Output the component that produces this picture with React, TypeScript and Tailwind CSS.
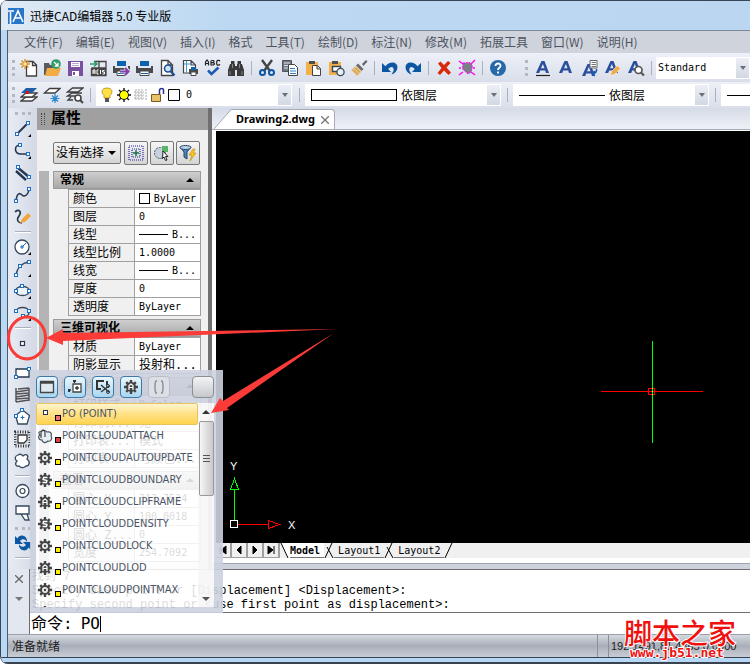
// src/App.tsx
import React, { useState } from 'react';

const SIMSUN = 'font-["DejaVu_Sans_Mono","Noto_Sans_CJK_SC",monospace]';
const YAHEI = 'font-["Noto_Sans_CJK_SC",sans-serif]';

const letterA = (
  <path d="M1 14 6.500 2H9.500L14 14H11L10.200 11.500H5.200L4.200 14ZM6 9.300H9.500L7.900 4.900Z" fill="#2b4f9e" />
);

const page = <path d="M6.500 2.500H13L16.500 6V17H6.500ZM12.500 2.500V6.500H16.500" fill="#fff" stroke="#3f3f3f" strokeWidth="1.300" />;

const printer = (
  <>
    <path d="M5 2H14V7H5Z" fill="#0d62ad" />
    <path d="M1 7H3V9H16V7H18V14H1Z" fill="#4a4a4a" />
    <path d="M5 12H14V16.500H5Z" fill="#fff" stroke="#4a4a4a" />
    <path d="M6 14.500H13" stroke="#0d62ad" />
  </>
);

const clipboard = (
  <>
    <path d="M2 3H14V16H2Z" fill="#f3b14c" />
    <path d="M5 2H11V5H5Z" fill="#4f4f4f" />
  </>
);

const gear = (
  <>
    <path
      d="M8 1V15M1 8H15M3.200 3.200 12.800 12.800M12.800 3.200 3.200 12.800"
      stroke="#444"
      strokeWidth="2.400"
    />
    <circle cx="8" cy="8" r="5" fill="#444" />
  </>
);

const topIcons: Record<string, React.ReactNode> = {
  new: (
    <>
      {page}
      <path d="M5 0V10M0 5H10M1.500 1.500 8.500 8.500M8.500 1.500 1.500 8.500" stroke="#d98a1e" strokeWidth="1.300" />
      <circle cx="5" cy="5" r="1.800" fill="#ffe9a0" />
    </>
  ),
  open: (
    <>
      <path d="M1 4H6L7 6H11V16H1Z" fill="#5a5a5a" />
      <path d="M4 9H18L15 17H2Z" fill="#f3ab43" />
      <circle cx="13" cy="5" r="4.800" fill="#2f9d6b" />
      <path d="M11 3 15 7M15 3.800V7H11.800" stroke="#fff" strokeWidth="1.300" fill="none" />
    </>
  ),
  save: (
    <>
      <path d="M2 2H17V17H2Z" fill="#7a4fa0" />
      <path d="M5 3H14V8H5Z" fill="#fff" />
      <path d="M6 4.500H13M6 6.500H13" stroke="#b8a6cc" />
      <path d="M6 12H13V17H6Z" fill="#fff" />
      <path d="M7 13H9V16H7Z" fill="#7a4fa0" />
    </>
  ),
  acis: (
    <>
      <path d="M5 2.500H17V10M2.500 9V16.500H17V9H2.500M10 2.500V9" stroke="#444" strokeWidth="1.300" fill="none" />
      <path d="M2 9H17V17H2Z" fill="#444" />
      <path d="M4 15V11H6V15M4 13H6M9.500 11H8V15H9.500M11.500 11V15M15.500 11.500H13.500V13H15.500V15H13.500" stroke="#fff" fill="none" />
      <path d="M1 5H7M5 2.500 8 5 5 7.500" stroke="#2f9d6b" strokeWidth="1.500" fill="none" />
    </>
  ),
  plotExport: (
    <>
      {printer}
      <path d="M8 12.500H17M13 8.500 17 12.500 13 16.500" stroke="#e4e8f0" strokeWidth="3.500" fill="none" />
      <path d="M8 12.500H16M13 9 16.500 12.500 13 16" stroke="#8440a8" strokeWidth="2.200" fill="none" />
    </>
  ),
  print: printer,
  preview: (
    <>
      <path d="M3.500 1.500H10L14.500 6V16.500H3.500ZM10 1.500V6H14.500" fill="#fff" stroke="#444" strokeWidth="1.300" />
      <circle cx="10" cy="9.500" r="3.500" fill="#cfe3f5" stroke="#1f4f8f" strokeWidth="1.600" />
      <path d="M12.500 12 16.500 16.500" stroke="#1f4f8f" strokeWidth="2.400" />
    </>
  ),
  pageSetup: (
    <>
      <path d="M2.500 1.500H10L14.500 6V14H2.500ZM10 1.500V6H14.500" fill="#fff" stroke="#444" strokeWidth="1.200" />
      <path d="M5.500 2V14M3 5H10" stroke="#3d9bd0" />
      <path d="M8 10H17V15H8Z" fill="#4a4a4a" />
      <path d="M10 8H15V11H10Z" fill="#0d62ad" />
      <path d="M10 13H15V16.500H10Z" fill="#fff" stroke="#4a4a4a" />
    </>
  ),
  spell: (
    <>
      <path
        d="M1.500 6.500V3L3 1L4.500 3V6.500M1.500 4.500H4.500M7 1.500V6H9.500L10.500 5L9.500 3.700H7.500M7.500 1.500H9.500L10 2.600L9.300 3.700M16 2.300L15 1.400H13.500L12.700 2.500V5L13.500 6.200H15L16 5.300"
        stroke="#222"
        strokeWidth="1.200"
        fill="none"
      />
      <path d="M4 11.500 7.500 15 14.500 8.500" stroke="#1d5cb0" strokeWidth="2.600" fill="none" />
    </>
  ),
  find: (
    <>
      <path d="M4 2H7.500V5H4ZM10.500 2H14V5H10.500ZM3 5H8V17H1V11ZM10 5H15L17 11V17H10ZM8 7H10V11H8Z" fill="#3a3a3a" />
      <path d="M5.500 5V9M12.500 5V9M3 12V16M15 12V16" stroke="#9a9a9a" strokeWidth=".8" />
    </>
  ),
  cut: (
    <>
      <path d="M4 1 12 12M14 1 6 12" stroke="#444" strokeWidth="2.400" />
      <circle cx="4.500" cy="13.500" r="2.500" fill="none" stroke="#0b57a4" strokeWidth="2" />
      <circle cx="13.500" cy="13.500" r="2.500" fill="none" stroke="#0b57a4" strokeWidth="2" />
    </>
  ),
  copy: (
    <>
      <path d="M1.500 1.500H10.500V12.500H1.500Z" fill="#6d7782" stroke="#555" />
      <path d="M3 4H9M3 6.500H7M3 9H7" stroke="#dfe5ea" />
      <path d="M7.500 5.500H13.500L16.500 8.500V16.500H7.500Z" fill="#fff" stroke="#444" />
      <path d="M9 9.500H14M9 12H15M9 14.500H15" stroke="#2f7dc5" />
    </>
  ),
  paste: (
    <>
      {clipboard}
      <path d="M8.500 6.500H13.500L16.500 9.500V16.500H8.500ZM13 6.500V10H16.500" fill="#fff" stroke="#444" />
    </>
  ),
  pasteBlock: (
    <>
      {clipboard}
      <path d="M5.500 7.500H13.500V12.500H5.500Z" fill="#fff" stroke="#35485c" strokeWidth="1.400" />
      <circle cx="13.500" cy="13" r="3.600" fill="#e9eef5" stroke="#35485c" strokeWidth="1.300" />
    </>
  ),
  match: (
    <>
      <path d="M12 5 16 1 17.500 2.500 13.500 7Z" fill="#666" />
      <path d="M8 4.500 13.500 10 11.500 12 6 6.500Z" fill="#6b6b6b" />
      <path d="M6 7 11.500 12.500 7 17 1 11Z" fill="#e7bd78" />
      <path d="M3 10.500 8 15.500M5 8.500 10 13.500" stroke="#c8954a" />
    </>
  ),
  undo: <path d="M1 4V13H10L7.200 10C10 6.500 13.500 7.500 12.500 12L10.500 15.500C18 13 18.500 3.500 11.500 3.500C8.500 3.500 6.500 4.800 4.500 7.200Z" fill="#0b57a4" />,
  redo: <path d="M17 4V13H8L10.800 10C8 6.500 4.500 7.500 5.500 12L7.500 15.500C0 13-.5 3.500 6.500 3.500C9.500 3.500 11.500 4.800 13.500 7.200Z" fill="#0b57a4" />,
  erase: <path d="M3 4.500 5.500 2.500 9 6 13 2 15.500 4 11.500 8.500 16 13.500 13.500 16 9 11.500 5 16 2.500 14 6.500 9Z" fill="#d8290b" />,
  explode: (
    <>
      <path d="M1 2 5 5M17 1 13 5M1 16 5 13M17 16 13 13M1 9H3M15 9H17" stroke="#f0f" strokeWidth="1.400" />
      <path d="M5 4 12 3.500 14.500 7 13 13 10 15 4.500 10Z" fill="#7a8087" stroke="#f0f" strokeDasharray="2 1" />
    </>
  ),
  help: (
    <>
      <circle cx="9" cy="9" r="8" fill="#2668a8" />
      <path d="M6.500 7C6.500 3.500 11.800 3.800 11.500 7C11.300 8.800 9 8.800 9 11M9 12.500V14.500" stroke="#fff" strokeWidth="1.900" fill="none" />
    </>
  ),
  text: (
    <>
      {letterA}
      <path d="M1 16.500H15" stroke="#222" strokeWidth="1.200" />
    </>
  ),
  mtext: letterA,
  textStyle: (
    <>
      <g transform="translate(0 3)">{letterA}</g>
      <path d="M9 1.500H16V9H9Z" fill="#fff" stroke="#666" />
      <path d="M10.500 3.500H15M10.500 5.500H15M10.500 7.500H15" stroke="#777" />
      <path d="M15.500 10C16 13 14 14.500 12 14.500M13.800 12 11.500 14.500 13.800 17" stroke="#1d5cb0" strokeWidth="1.600" fill="none" />
    </>
  ),
  textEdit: (
    <>
      {letterA}
      <path d="M6 16.500 7.500 12.500 13.500 6.500 16.500 9.500 10.500 15.500Z" fill="#f0ad4e" stroke="#fff" strokeWidth=".5" />
    </>
  ),
  textFind: (
    <>
      {letterA}
      <circle cx="11.500" cy="11" r="3.500" fill="#fff" stroke="#555" strokeWidth="1.700" />
      <path d="M14 13.500 17 16.500" stroke="#555" strokeWidth="2.200" />
    </>
  ),
  layers: (
    <>
      <path d="M1 15 6 11H17L12 15Z" fill="#fff" stroke="#3f3f3f" strokeWidth="1.400" />
      <path d="M1 11 6 7H17L12 11Z" fill="#fff" stroke="#3f3f3f" strokeWidth="1.400" />
      <path d="M1 7 6 2H17L12 7Z" fill="#1f5fa5" />
      <path d="M6 5H9V8H6Z" fill="#e01010" />
    </>
  ),
  layerFreeze: (
    <>
      <path d="M1.500 7 6.500 2.500H17L12 7Z" fill="#fff" stroke="#3f3f3f" strokeWidth="1.300" />
      <path d="M12 8V17M7.500 12.500H16.500M9 9.500 15 15.500M15 9.500 9 15.500" stroke="#2d86d0" strokeWidth="1.200" />
    </>
  ),
  layerFind: (
    <>
      <path d="M1.500 6 6.500 2H17L12 6ZM9 10H1.500L6 7H16M7 14H2L5 11" fill="none" stroke="#3f3f3f" strokeWidth="1.300" />
      <circle cx="12" cy="12" r="3" fill="#fff" stroke="#444" strokeWidth="1.600" />
      <path d="M14 14 17 17" stroke="#444" strokeWidth="2" />
    </>
  ),
};

const node = (x: number, y: number) => (
  <rect key={`${x}-${y}`} x={x - 1.5} y={y - 1.5} width="3" height="3" fill="#fff" stroke="#1d6fc4" />
);
const flyout = <path d="M17 14V17H14Z" fill="#000" />;

const drawIcons: Record<string, React.ReactNode> = {
  line: <><path d="M3 14 14 3" stroke="#26374f" strokeWidth="2" />{node(3, 14)}{node(14, 3)}{flyout}</>,
  polyline: <><path d="M6 3C0 3 0 11 6 12H13" stroke="#26374f" strokeWidth="1.600" fill="none" />{node(6, 3)}{node(14, 12)}{flyout}</>,
  mline: <><path d="M3 3 15 13M2 7 12 16" stroke="#26374f" strokeWidth="2.400" />{node(4, 3)}{node(15, 13)}</>,
  spline: <><path d="M2 15C3 6 6 7 8 9S14 10 15 3" stroke="#26374f" strokeWidth="1.600" fill="none" />{node(2, 15)}{node(15, 3)}</>,
  sketch: <><path d="M1 4C5 0 8 4 5 8S4 15 8 15" stroke="#26374f" strokeWidth="1.600" fill="none" /><path d="M6 15 8 11 14 5 17 8 11 14Z" fill="#f0a63c" /></>,
  circle: <><circle cx="8" cy="9" r="7" fill="#fff" stroke="#35485c" strokeWidth="1.300" /><path d="M8 9 12 5M6 9H10M8 7V11" stroke="#1d6fc4" />{flyout}</>,
  arc: <><path d="M2 15C3 8 8 3 15 2" stroke="#35485c" strokeWidth="1.400" fill="none" />{node(2, 15)}{node(6, 6)}{node(15, 2)}{flyout}</>,
  ellipse: <><ellipse cx="8.500" cy="9" rx="7" ry="4.500" fill="#eef4fb" stroke="#35485c" strokeWidth="1.300" />{node(8, 4)}{node(2, 9)}{node(15, 9)}{flyout}</>,
  ellipseArc: <><path d="M2 8C2 2 15 2 15 8S9 12 9 12" stroke="#35485c" strokeWidth="1.300" fill="none" />{node(2, 7)}{node(9, 12)}{node(15, 7)}{flyout}</>,
  point: <rect x="6.500" y="7.500" width="4" height="4" fill="#fff" stroke="#26374f" strokeWidth="1.200" />,
  rect: <><path d="M2 5H15V13H2Z" fill="#fff" stroke="#26374f" strokeWidth="1.300" />{node(2, 13)}{node(15, 5)}</>,
  hatch: <path d="M2 2V16M4 3 15 2M2 6 15 4M2 8 15 7M2 11 15 9M2 13 15 12M2 16 15 14M15 2V15" stroke="#555" strokeWidth="1.500" />,
  polygon: <><path d="M8.500 2 15.500 7.500 13 16H4L1.500 7.500Z" fill="#fff" stroke="#35485c" strokeWidth="1.300" /><path d="M6.500 9.500H10.500M8.500 7.500V11.500" stroke="#1d6fc4" />{node(2, 8)}{node(8, 2)}</>,
  region: <><path d="M1 2H16V16H1Z" fill="none" stroke="#333" strokeWidth="3" strokeDasharray="1 1.500" /><path d="M4 5H13V10L10 13H4Z" fill="#fff" stroke="#333" strokeWidth="1.300" /></>,
  cloud: <path d="M4 3C7 1 8 3 9 4C13 1 15 4 13 7C17 10 15 14 12 14C9 17 6 15 5 14C1 15 1 11 3 9C0 7 1 4 4 3Z" fill="#fff" stroke="#35485c" strokeWidth="1.300" />,
  donut: <><circle cx="8.500" cy="9" r="6.500" fill="#fff" stroke="#35485c" strokeWidth="1.300" /><circle cx="8.500" cy="9" r="2.500" fill="none" stroke="#35485c" strokeWidth="1.200" /></>,
  callout: <path d="M2 2H15V10H2ZM5 10H13L15 16H11L7 10" fill="#fff" stroke="#35485c" strokeWidth="1.300" />,
  refresh: <path d="M1 2V10H9L6 7C8 4 12 5 13 8C14 2 6-1 3.500 4.500ZM17 16V8H9L12 11C10 14 6 13 5 10C4 16 12 19 14.500 13.500Z" fill="#0b57a4" />,
};

const menus = ['文件(F)', '编辑(E)', '视图(V)', '插入(I)', '格式', '工具(T)', '绘制(D)', '标注(N)', '修改(M)', '拓展工具', '窗口(W)', '说明(H)'];

const standardTools = [
  ['new', 'open', 'save', 'acis', 'plotExport', 'print', 'preview', 'pageSetup', 'spell', 'find'],
  ['cut', 'copy', 'paste', 'pasteBlock', 'match'],
  ['undo', 'redo'],
  ['erase', 'explode'],
  ['help'],
];
const textTools = ['text', 'mtext', 'textStyle', 'textEdit', 'textFind'];

const drawTools = [
  ['line', 'polyline', 'mline', 'spline', 'sketch'],
  ['circle', 'arc', 'ellipse', 'ellipseArc'],
  ['point'],
  ['rect', 'hatch', 'polygon', 'region', 'cloud'],
  ['donut', 'callout'],
];

interface Prop {
  label: string;
  value: string;
  mark?: 'box' | 'line';
}

const sections: Array<{ title: string; rows: Prop[] }> = [
  {
    title: '常规',
    rows: [
      { label: '颜色', value: 'ByLayer', mark: 'box' },
      { label: '图层', value: '0' },
      { label: '线型', value: 'B...', mark: 'line' },
      { label: '线型比例', value: '1.0000' },
      { label: '线宽', value: 'B...', mark: 'line' },
      { label: '厚度', value: '0' },
      { label: '透明度', value: 'ByLayer' },
    ],
  },
  {
    title: '三维可视化',
    rows: [
      { label: '材质', value: 'ByLayer' },
      { label: '阴影显示', value: '投射和...' },
    ],
  },
  {
    title: '打印样式',
    rows: [
      { label: '打印样式', value: 'ByColor' },
      { label: '打印机...', value: '无' },
      { label: '打印表...', value: '模式' },
      { label: '打印表...', value: '与颜色...' },
    ],
  },
  {
    title: '查看',
    rows: [
      { label: '圆心 X', value: '313.7524' },
      { label: '圆心 Y', value: '100.0018' },
      { label: '圆心 Z...', value: '0' },
      { label: '宽度', value: '254.7092' },
    ],
  },
];

const suggestions = [
  { name: 'POINTCLOUDATTACH', dot: 'bg-[#e04040]', kind: 'cloud' },
  { name: 'POINTCLOUDAUTOUPDATE', dot: 'bg-[#ffee00]', kind: 'gear' },
  { name: 'POINTCLOUDBOUNDARY', dot: 'bg-[#ffee00]', kind: 'gearS' },
  { name: 'POINTCLOUDCLIPFRAME', dot: 'bg-[#ffee00]', kind: 'gearA' },
  { name: 'POINTCLOUDDENSITY', dot: 'bg-[#ffee00]', kind: 'gearS' },
  { name: 'POINTCLOUDLOCK', dot: 'bg-[#ffee00]', kind: 'gear' },
  { name: 'POINTCLOUDLOD', dot: 'bg-[#ffee00]', kind: 'gearA' },
  { name: 'POINTCLOUDPOINTMAX', dot: 'bg-[#ffee00]', kind: 'gear' },
];

const ToolButton: React.FC<{ name: string }> = ({ name }) => (
  <button type="button" aria-label={name} className="flex h-6 w-[23px] shrink-0 items-center justify-center">
    <svg viewBox="0 0 18 18" className="size-[18px]" fill="none">{topIcons[name]}</svg>
  </button>
);

const Sep: React.FC = () => (
  <span className="flex w-2 shrink-0 justify-center">
    <span className="h-[14px] w-px bg-[#a9b0be]" />
  </span>
);

const Grip: React.FC = () => <span className="h-4 w-0 shrink-0 border-l-3 border-dotted border-[#b3b8c3]" />;

const Arrow: React.FC = () => (
  <span className="flex w-[15px] shrink-0 items-center justify-center self-stretch border border-white bg-linear-to-b from-[#eceff5] to-[#d2d8e4]">
    <svg viewBox="0 0 6 4" className="h-1 w-1.5"><path d="M0 0H6L3 4Z" fill="#6b7078" /></svg>
  </span>
);

const Combo: React.FC<{ label: string; value: string; children?: React.ReactNode; className: string; textClass: string }> = ({
  label,
  value,
  children,
  className,
  textClass,
}) => (
  <label className={`flex h-[22px] items-center overflow-hidden bg-white ${className}`}>
    {children}
    <select aria-label={label} className={`min-w-0 flex-1 appearance-none truncate bg-transparent text-black outline-none ${textClass}`}>
      <option>{value}</option>
    </select>
    <Arrow />
  </label>
);

const CommandIcon: React.FC<{ kind: string }> = ({ kind }) => (
  <svg viewBox="0 0 16 16" className="size-4 shrink-0" fill="none">
    {kind === 'cloud' ? (
      <>
        <path d="M5 3C8 1 9 3 10 4C14 3 15 6 14 8C16 11 13 14 11 13C8 16 5 14 5 12C1 12 1 8 3 7C1 5 2 3 5 3Z" fill="#e8edf4" stroke="#4b5663" strokeWidth="1.200" />
        <path d="M4 10V5C4 1 8 1 8 5V9" stroke="#222" />
      </>
    ) : (
      gear
    )}
    {kind === 'gear' && <><circle cx="8" cy="8" r="3" fill="#eee" /><circle cx="8" cy="8" r="1.200" fill="#444" /></>}
    {kind === 'gearS' && <path d="M10.500 5.500H6.500L6 7.500 10 8.500 9.500 10.500H5.500" stroke="#fff" strokeWidth="1.300" />}
    {kind === 'gearA' && <path d="M6 11V6.500L8 5 10 6.500V11M6 8.500H10" stroke="#fff" strokeWidth="1.200" />}
  </svg>
);

const PropertySection: React.FC<{ title: string; rows: Prop[] }> = ({ title, rows }) => (
  <section className="mb-[3px]">
    <h3 className="flex h-[18px] items-center justify-between border border-[#9a9a9a] bg-linear-to-b from-[#cfcfcf] to-[#a8a8a8] px-1.5 text-xs font-bold">
      {title}
      <svg viewBox="0 0 8 4" className="h-1 w-2"><path d="M0 4H8L4 0Z" /></svg>
    </h3>
    <table className="ml-[15px] w-[133px] table-fixed border-collapse">
      <tbody>
        {rows.map((row, i) => (
          <tr key={i} className="h-[18px]">
            <th scope="row" className="border border-[#a0a0a0] bg-[#f0f0f0] px-1 py-0 text-left text-xs leading-4 font-normal whitespace-nowrap">
              {row.label}
            </th>
            <td className="border border-[#a0a0a0] bg-white px-1 py-0 text-[10px] leading-4 whitespace-nowrap">
              <span className="flex items-center gap-1">
                {row.mark === 'box' && <span className="size-[11px] border border-black" />}
                {row.mark === 'line' && <span className="h-px w-8 bg-black" />}
                <span className={/[一-龥]/.test(row.value) ? 'text-xs leading-4' : ''}>{row.value}</span>
              </span>
            </td>
          </tr>
        ))}
      </tbody>
    </table>
  </section>
);

const CommandPopup: React.FC = () => (
  <div className="absolute bottom-[51px] left-[29px] flex h-[243px] w-[193px] flex-col">
    <div className="flex h-[33px] shrink-0 items-center gap-1.5 bg-[#ccd2df]/90 pr-[9px] pl-1.5">
      {['window', 'insert', 'trim', 'settings'].map((name) => (
        <button
          key={name}
          type="button"
          aria-label={name}
          className="flex size-[22px] items-center justify-center rounded-sm border border-[#3a79a8] bg-linear-to-b from-[#eaf6fd] to-[#a9d6f0]"
        >
          <svg viewBox="0 0 16 16" className="size-4" fill="none">
            {name === 'window' && <><path d="M1.500 2.500H14.500V13.500H1.500Z" fill="#dfe9f0" stroke="#444" strokeWidth="1.300" /><path d="M1 3.500H15" stroke="#444" strokeWidth="2.500" /></>}
            {name === 'insert' && <><path d="M6 5H14V13H6Z" fill="#fff" stroke="#444" strokeWidth="1.300" /><path d="M10 7V11M8 9H12M7.500 1V4M1 11H4" stroke="#333" strokeWidth="1.300" /><path d="M6 1H9V3H6ZM1 10H3V13H1Z" fill="#333" /></>}
            {name === 'trim' && <><path d="M9 2H2V10H6M12 2V6" stroke="#333" strokeWidth="2" /><path d="M6 6 14 13M6 13 14 7" stroke="#333" strokeWidth="1.400" /><circle cx="13" cy="7" r="1.500" stroke="#333" /><circle cx="13" cy="13" r="1.500" stroke="#333" /></>}
            {name === 'settings' && <>{gear}<path d="M6 11V6.500L8 5 10 6.500V11M6 8.500H10" stroke="#fff" strokeWidth="1.200" /></>}
          </svg>
        </button>
      ))}
      <button type="button" aria-label="brackets" className="flex size-[22px] items-center justify-center rounded-sm border border-[#b9bdc4] bg-[#dcdfe5]">
        <svg viewBox="0 0 14 14" className="size-3.5" fill="none" stroke="#8a8d92" strokeWidth="1.400">
          <path d="M5 1H4C3 2 3 4 3 7S3 12 4 13H5M9 1H10C11 2 11 4 11 7S11 12 10 13H9" />
        </svg>
      </button>
      <button type="button" aria-label="options" className="ml-auto size-[22px] rounded-sm border border-[#8b8e94] bg-linear-to-b from-[#f4f4f5] to-[#c6c8cc]" />
    </div>
    <div className="flex min-h-0 flex-1 border-r-[9px] border-b-6 border-l-6 border-[#ccd2df]/90 bg-white/85 bg-clip-padding">
      <ul className='min-w-0 flex-1 overflow-hidden font-["DejaVu_Sans_Condensed","DejaVu_Sans",sans-serif] text-[11px] font-stretch-condensed text-[#4b5566]'>
        <li className="flex h-[22px] items-center rounded-xs border border-[#e6c35c] bg-linear-to-b from-[#fff6d0] via-[#ffe28a] via-45% to-[#ffd44f]">
          <span className="flex w-4 justify-center"><span className="mb-1 size-[5px] border border-[#26374f] bg-white" /></span>
          <span className="mt-2 mr-px ml-0.5 size-1.5 border border-black bg-[#f07070]" />
          PO (POINT)
        </li>
        {suggestions.map((item) => (
          <li key={item.name} className="flex h-[22px] items-center pl-px whitespace-nowrap">
            <CommandIcon kind={item.kind} />
            <span className={`mt-2 mr-px ml-0.5 size-1.5 shrink-0 border border-black ${item.dot}`} />
            {item.name}
          </li>
        ))}
        <li className="flex pt-1 pl-px"><CommandIcon kind="gear" /></li>
      </ul>
      <div className="flex w-4 shrink-0 flex-col items-center bg-[#f4f4f4]/70">
        <button type="button" aria-label="up" className="flex h-[18px] items-center"><svg viewBox="0 0 8 4" className="h-1 w-2"><path d="M0 4H8L4 0Z" fill="#333" /></svg></button>
        <span className="flex h-[75px] w-[15px] flex-col items-center justify-center gap-0.5 rounded-xs border border-[#999] bg-linear-to-r from-[#f6f6f6] to-[#c9c9cc]">
          <span className="h-px w-[7px] bg-[#555]" />
          <span className="h-px w-[7px] bg-[#555]" />
          <span className="h-px w-[7px] bg-[#555]" />
        </span>
        <button type="button" aria-label="down" className="mt-auto flex h-4 items-center"><svg viewBox="0 0 8 4" className="h-1 w-2"><path d="M0 0H8L4 4Z" fill="#555" /></svg></button>
      </div>
    </div>
  </div>
);

const Canvas: React.FC = () => (
  <main className="relative min-h-0 flex-1 overflow-hidden border-t border-white bg-black">
    <svg viewBox="0 0 104 104" className="absolute top-[209px] left-[384px] size-[104px]" fill="none" shapeRendering="crispEdges">
      <path d="M1 51.500H103" stroke="#f00" />
      <path d="M52.500 1V103" stroke="#0f0" />
      <rect x="48.500" y="48.500" width="6" height="6" stroke="#f00" />
      <path d="M52 48.500H53M52 51.500H53M52 54.500H53" stroke="#ff0" />
    </svg>
    <svg viewBox="0 0 72 72" className="absolute bottom-3 left-3 size-[72px]" fill="none" shapeRendering="crispEdges">
      <path d="M6.500 61V31M2.500 30.500H10.500L6.500 19.500Z" stroke="#0f0" />
      <path d="M10 65.500H40M40.500 61.500V69.500L51.500 65.500Z" stroke="#f00" />
      <rect x="2.500" y="61.500" width="7" height="7" stroke="#fff" />
      <text x="2" y="11" className='fill-white font-["Liberation_Sans",sans-serif] text-[11px]'>Y</text>
      <text x="60" y="70" className='fill-white font-["Liberation_Sans",sans-serif] text-[11px]'>X</text>
    </svg>
  </main>
);

const LayoutTabs: React.FC = () => (
  <div className={`flex h-[15px] shrink-0 items-stretch bg-[#f0f0f0] text-[10px] ${SIMSUN}`}>
    {['M3 2V10M9 2V10L4 6Z', 'M8 2V10L4 6Z', 'M4 2V10L8 6Z', 'M3 2V10L8 6ZM9 2V10'].map((d) => (
      <button key={d} type="button" aria-label="scroll tabs" className="flex w-4 items-center justify-center border-r-2 border-b border-[#a0a0a0]">
        <svg viewBox="0 0 12 12" className="size-3" stroke="#000"><path d={d} /></svg>
      </button>
    ))}
    {['Model', 'Layout1', 'Layout2'].map((tab, i) => (
      <button key={tab} type="button" className={`flex items-stretch border-b border-[#777] leading-[15px] ${i === 0 ? 'bg-white font-bold' : ''}`}>
        <svg viewBox="0 0 10 15" className="h-[15px] w-2.5 bg-[#f0f0f0]" fill="none" stroke="#000">
          {i === 0 && <path d="M1 0 8 15H10V0Z" fill="#fff" stroke="none" />}
          <path d={i === 0 ? 'M1 0 8 15' : 'M1 15 8 0M3 4 9 15'} />
        </svg>
        <span className={i === 0 ? 'pr-1' : 'px-1'}>{tab}</span>
      </button>
    ))}
    <svg viewBox="0 0 10 15" className="h-[15px] w-2.5" fill="none" stroke="#000"><path d="M1 15 8 0" /></svg>
  </div>
);

const App: React.FC = () => {
  const [command, setCommand] = useState('PO');

  return (
    <div className={`relative flex h-screen flex-col overflow-hidden rounded-l-lg border-l border-[#3b4654] bg-[#b9d8f4] text-xs text-black ${YAHEI}`}>
      {/* title bar */}
      <header className="flex h-[30px] shrink-0 items-center gap-1.5 border-t border-[#3b4654] bg-linear-to-r from-[#dfeaf5] via-[#bcd8f2] via-30% to-[#bad6f1] pl-[7px]">
        <svg viewBox="0 0 16 16" className="size-4">
          <path d="M0 0H16V16H0Z" fill="#2677c9" />
          <path d="M5 14 10 3 15 14M7 10H13M2.500 4V16M0 3H6" stroke="#fff" strokeWidth="1.600" fill="none" />
        </svg>
        <h1>迅捷CAD编辑器 5.0 专业版</h1>
      </header>

      <div className="ml-1.5 flex min-h-0 flex-1 flex-col border-l border-[#4c5a69] bg-[#dde2eb]">
        <nav className="flex h-[23px] shrink-0 items-center gap-[13px] border-t border-[#7d8998] bg-[#cfd3dc] pl-4 text-[#4d5360]">
          {menus.map((item) => (
            <button key={item} type="button" className="whitespace-nowrap">{item}</button>
          ))}
        </nav>

        <div className="flex h-[29px] shrink-0 items-center overflow-hidden bg-linear-to-b from-[#edf0f7] to-[#d9deea] pl-1">
          <Grip />
          <div className="ml-0.5 flex items-center">
            {standardTools.map((group, i) => (
              <React.Fragment key={i}>
                {i > 0 && <Sep />}
                {group.map((name) => <ToolButton key={name} name={name} />)}
              </React.Fragment>
            ))}
          </div>
          <span className="mr-1 ml-4 flex items-center">
            <Grip />
          </span>
          {textTools.map((name) => <ToolButton key={name} name={name} />)}
          <Sep />
          <Combo label="文字样式" value="Standard" className="ml-px min-w-[93px] flex-1" textClass={`pl-0.5 text-[10px] ${SIMSUN}`} />
        </div>

        <div className="flex h-[26px] shrink-0 items-center overflow-hidden bg-linear-to-b from-[#edf0f7] to-[#d9deea] pl-1">
          <Grip />
          <div className="ml-0.5 flex">
            {['layers', 'layerFreeze', 'layerFind'].map((name) => <ToolButton key={name} name={name} />)}
          </div>
          <Sep />
          <Combo label="图层" value="0" className="ml-0.5 w-[196px] shrink-0 pl-1" textClass={`pl-1 text-[10px] ${SIMSUN}`}>
            <svg viewBox="0 0 82 18" className="h-[18px] w-[82px] shrink-0" fill="none">
              <path d="M7 2C1 2 1 7 4 9.500V12H10V9.500C13 7 13 2 7 2Z" fill="#ffe04a" stroke="#b08a10" strokeWidth=".8" />
              <path d="M5 12H9V16H5Z" fill="#555" />
              <path d="M24 2V16M17 9H31M19 4 29 14M29 4 19 14" stroke="#111" strokeWidth="1.400" />
              <circle cx="24" cy="9" r="4.500" fill="#ff0" stroke="#111" />
              <path d="M36 3V15M39 3V15M42 3V15M34 6H44M34 9H44M34 12H44M46 3V15" stroke="#a5a8ac" strokeDasharray="2 1" />
              <path d="M51.500 8.500H60.500V15.500H51.500Z" fill="#e8c16c" stroke="#7a5a1e" />
              <path d="M59.500 8V4C60 2 63.500 2 63.500 4V8" stroke="#22308f" strokeWidth="1.500" />
              <path d="M68.500 3.500H79.500V14.500H68.500Z" fill="#fff" stroke="#000" />
            </svg>
          </Combo>
          <span className="ml-[3px]"><Sep /></span>
          <Combo label="颜色" value="依图层" className="ml-0.5 w-[196px] shrink-0 pl-1.5" textClass="pl-1 text-xs">
            <span className="h-3 w-[86px] shrink-0 border border-black" />
          </Combo>
          <span className="ml-0.5"><Sep /></span>
          <Combo label="线型" value="依图层" className="ml-0.5 w-[196px] shrink-0 pl-1.5" textClass="pl-1 text-xs">
            <span className="h-px w-[86px] shrink-0 bg-black" />
          </Combo>
          <span className="ml-0.5"><Sep /></span>
          <Combo label="线宽" value="依图层" className="ml-0.5 w-[196px] shrink-0 pl-1.5" textClass="pl-1 text-xs">
            <span className="h-px w-[86px] shrink-0 bg-black" />
          </Combo>
        </div>

        <div className="flex min-h-0 flex-1">
          {/* draw toolbar */}
          <aside className="flex w-[29px] shrink-0 flex-col items-center overflow-hidden bg-linear-to-r from-[#e8ecf4] to-[#d3d9e5]">
            <span className="mt-1 mb-[3px] w-4 shrink-0 border-t-3 border-dotted border-[#b3b8c3]" />
            {drawTools.map((group, i) => (
              <React.Fragment key={i}>
                {i > 0 && <span className="my-[3px] h-0.5 w-4 shrink-0 border-t border-[#a9b0be] bg-white" />}
                {group.map((name) => (
                  <button key={name} type="button" aria-label={name} className="flex h-[22px] shrink-0 items-center justify-center">
                    <svg viewBox="0 0 18 18" className="size-[18px]" fill="none">{drawIcons[name]}</svg>
                  </button>
                ))}
              </React.Fragment>
            ))}
            <span className="mt-[3px] mb-0.5 w-4 shrink-0 border-t-3 border-dotted border-[#b3b8c3]" />
            <button type="button" aria-label="refresh" className="flex h-[22px] shrink-0 items-center">
              <svg viewBox="0 0 18 18" className="size-[18px]" fill="none">{drawIcons.refresh}</svg>
            </button>
            <span className="my-[3px] h-0.5 w-4 shrink-0 border-t border-[#a9b0be] bg-white" />
          </aside>

          {/* properties palette */}
          <section className={`flex w-[175px] shrink-0 flex-col overflow-hidden border-r-4 border-[#707070] bg-[#f0f0f0] ${SIMSUN}`}>
            <h2 className="flex h-[22px] shrink-0 items-center gap-1.5 bg-[#a0a0a0] pl-1 text-[15px] font-bold">
              <span className="h-3 w-1 border-x border-dotted border-[#444]" />
              属性
            </h2>
            <div className="flex h-[41px] shrink-0 items-center gap-0.5 pt-1 pl-4">
              <label className="mr-px flex h-[22px] w-[68px] items-center rounded-xs border border-[#777] bg-linear-to-b from-[#f6f6f6] to-[#d4d4d4] pr-1">
                <select aria-label="选择" className="min-w-0 flex-1 appearance-none overflow-hidden bg-transparent pl-0.5 text-xs text-clip outline-none">
                  <option>没有选择</option>
                </select>
                <svg viewBox="0 0 8 4" className="ml-1 h-1 w-2"><path d="M0 0H8L4 4Z" /></svg>
              </label>
              {['pick', 'quick', 'filter'].map((name) => (
                <button key={name} type="button" aria-label={name} className="flex size-6 items-center justify-center rounded-xs border border-[#777] bg-linear-to-b from-[#f6f6f6] to-[#d4d4d4]">
                  <svg viewBox="0 0 18 18" className="size-[18px]" fill="none">
                    {name === 'pick' && <><path d="M2 2H16V16H2ZM5 5H13V13H5Z" stroke="#26269c" strokeDasharray="1 1" strokeWidth="1.200" /><path d="M9 6V12M6 9H12" stroke="#187048" strokeWidth="1.500" /></>}
                    {name === 'quick' && <><circle cx="7" cy="9" r="5.500" fill="#c7d0dc" stroke="#44546a" strokeDasharray="2 1" /><path d="M9 2H15V8H9Z" fill="#58b368" /><path d="M10 7 15 12.500H12.500L14 16 12.500 16.500 11 13 9.500 14.500Z" fill="#fff" stroke="#222" /></>}
                    {name === 'filter' && <><path d="M1 3H12L8 8V15L5 13V8Z" fill="#4a86bd" stroke="#24435f" /><ellipse cx="6.500" cy="3.500" rx="5.500" ry="2" fill="#b9d3e8" stroke="#24435f" /><path d="M14 5 10 11H13L11 17 17 9H14L16 5Z" fill="#ffc61a" stroke="#b8860b" strokeWidth=".6" /></>}
                  </svg>
                </button>
              ))}
            </div>
            <div className="flex min-h-0 flex-1 overflow-hidden">
              <span className="mr-1 ml-0.5 w-2.5 shrink-0 bg-[#b4b4b4]" />
              <div className="w-[148px]">
                {sections.map((section) => <PropertySection key={section.title} {...section} />)}
              </div>
            </div>
          </section>

          {/* drawing area */}
          <div className="flex min-w-0 flex-1 flex-col">
            <div className="flex h-[22px] shrink-0 items-end border-b border-[#a7adb8] bg-linear-to-b from-[#d5dbe6] to-[#eef1f7] pl-0.5">
              <svg viewBox="0 0 20 20" className="h-5 w-5"><path d="M0 20 17 1H20V20Z" fill="#fff" /><path d="M0 20 17 .500H20" fill="none" stroke="#a7adb8" /></svg>
              <div className="flex h-5 items-center gap-1.5 rounded-tr-sm border-t border-r border-[#a7adb8] bg-white pr-[5px] pl-0.5">
                <span className='font-["Noto_Sans",sans-serif] text-[11px] font-bold'>Drawing2.dwg</span>
                <button type="button" aria-label="close drawing">
                  <svg viewBox="0 0 8 8" className="size-2"><path d="M0 0 8 8M8 0 0 8" stroke="#777" strokeWidth="1.300" /></svg>
                </button>
              </div>
            </div>
            <div className="flex min-h-0 flex-1 flex-col border-l-4 border-white">
              <Canvas />
              <LayoutTabs />
            </div>
            <span className="h-[5px] shrink-0 bg-white" />
            <span className="h-1.5 shrink-0 border-t border-[#9fa5b0] bg-[#cdd2dc]" />
          </div>
        </div>

        {/* command line */}
        <div className="flex h-[65px] shrink-0">
          <div className="flex w-[21px] shrink-0 flex-col items-center gap-3.5 bg-[#e3e7f0] pt-1.5">
            <button type="button" aria-label="close"><svg viewBox="0 0 8 8" className="size-2"><path d="M0 0 8 8M8 0 0 8" stroke="#666" strokeWidth="1.300" /></svg></button>
            <button type="button" aria-label="history"><svg viewBox="0 0 8 4" className="h-1 w-2"><path d="M0 0H8L4 4Z" fill="#777" /></svg></button>
          </div>
          <div className={`flex min-w-0 flex-1 flex-col border-t border-l border-[#6d6d6d] bg-white ${SIMSUN}`}>
            <div className='h-[42px] shrink-0 pl-0.5 font-["Liberation_Mono","Noto_Sans_CJK_SC",monospace] text-xs leading-[14px] whitespace-pre'>
              <p>找到 7</p>
              <p>Specify base point or [Displacement] &lt;Displacement&gt;:</p>
              <p>Specify second point or &lt;use first point as displacement&gt;:</p>
            </div>
            <div className="flex flex-1 items-center border-t border-[#6d6d6d] pl-px">
              <label htmlFor="command" className="mr-2 text-base leading-5">命令:</label>
              <input
                id="command"
                value={command}
                onChange={(e) => setCommand(e.target.value)}
                className="w-[2ch] text-base leading-5 outline-none"
              />
              <span className="h-4 w-px bg-black" />
            </div>
          </div>
        </div>

        <footer className="flex h-[23px] shrink-0 items-center justify-between border-t border-[#999ea8] bg-linear-to-b from-[#d5d9e0] via-[#a9aeb8] to-[#c9cdd5] pl-1 text-[#222]">
          <span>准备就绪</span>
          <span className="flex h-full items-center">
            <span className="h-full w-3 border-x border-[#8a8f99]" />
            <span className='w-[141px] pl-0.5 font-["Liberation_Sans",sans-serif] text-[11px] whitespace-nowrap'>192.1491,81.4365,0.0000</span>
          </span>
        </footer>
      </div>
      <span className="h-[7px] shrink-0 border-t border-b-2 border-[#39434f] bg-[#b7d7f6]" />

      <CommandPopup />

      {/* annotations */}
      <svg viewBox="0 0 350 430" className="pointer-events-none absolute top-0 left-0 h-[430px] w-[350px]" fill="#fb3b38">
        <ellipse cx="26" cy="338" rx="18.500" ry="21" fill="none" stroke="#fb3b38" strokeWidth="3" />
        <path d="M45 338 62 329V333L337 329 62 341V345Z" />
        <path d="M210 413 219 398 222 401 333 333 226 408 228 410Z" />
      </svg>
      <svg viewBox="0 0 124 56" className="pointer-events-none absolute right-1 bottom-0 h-14 w-[124px] fill-[#f01010] stroke-white [paint-order:stroke]" strokeWidth="2" strokeLinejoin="round">
        <text x="2" y="36" className="text-[28px] font-medium">脚本之家</text>
        <text x="8" y="49" className='font-["DejaVu_Sans_Mono",monospace] text-[13px] font-bold'>www.jb51.net</text>
      </svg>
    </div>
  );
};

export default App;
